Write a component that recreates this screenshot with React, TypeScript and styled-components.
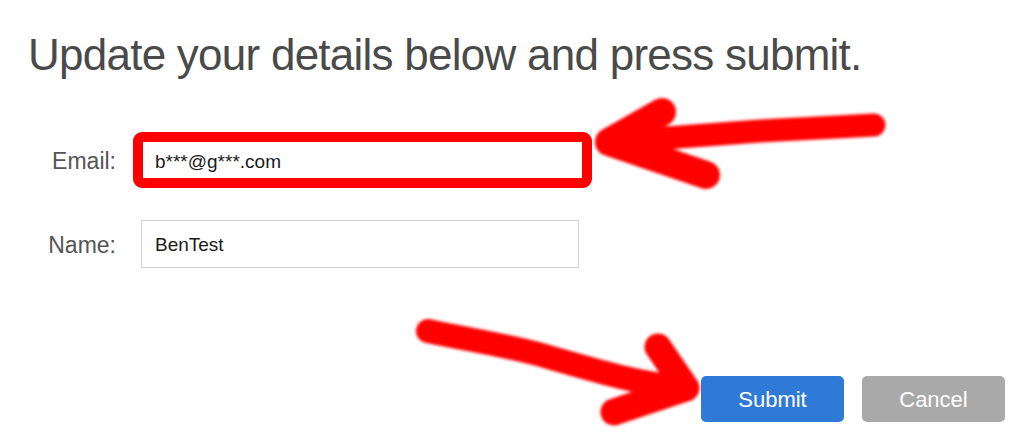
import styled, { createGlobalStyle } from "styled-components";

const GlobalStyle = createGlobalStyle`
    html, body {
        margin: 0;
        padding: 0;
        background: #ffffff;
    }
    body {
        font-family: "Liberation Sans", Helvetica, Arial, sans-serif;
    }
    * {
        box-sizing: border-box;
    }
`;

const App = () => {
    // 더미 사용자 정보
    const user = {
        email: "b***@g***.com",
        name: "BenTest"
    };

    return (
        <>
            <GlobalStyle />
            <Page>
                <Title>Update your details below and press submit.</Title>

                {/* 입력 폼 */}
                <Form>
                    <FieldRow>
                        <Label>Email:</Label>
                        <Input highlighted>{user.email}</Input>
                    </FieldRow>

                    <FieldRow>
                        <Label>Name:</Label>
                        <Input>{user.name}</Input>
                    </FieldRow>
                </Form>

                {/* 버튼 */}
                <ButtonRow>
                    <Button variant="primary">Submit</Button>
                    <Button variant="secondary">Cancel</Button>
                </ButtonRow>

                {/* 손그림 화살표 */}
                <Annotations width="1024" height="442" viewBox="0 0 1024 442">
                    <defs>
                        <filter id="soft" x="-10%" y="-10%" width="120%" height="120%">
                            <feGaussianBlur stdDeviation="1.8" />
                        </filter>
                    </defs>
                    <g
                        filter="url(#soft)"
                        fill="none"
                        stroke="#ff0000"
                        strokeLinecap="round"
                        strokeLinejoin="round"
                    >
                        <path d="M 874 125 L 760 131 L 612 142" strokeWidth="23" />
                        <path d="M 662 112 L 609 142 L 706 175" strokeWidth="28" />

                        <path
                            d="M 428 331 C 470 340, 510 346, 545 356 C 600 372, 640 384, 686 388"
                            strokeWidth="24"
                        />
                        <path d="M 658 347 L 686 388 L 614 412" strokeWidth="27" />
                    </g>
                </Annotations>
            </Page>
        </>
    );
};

export default App;

const Page = styled.div`
    position: relative;
    width: 1024px;
    height: 442px;
    padding-top: 30px;
    overflow: hidden;
`;

const Title = styled.h1`
    margin: 0 0 0 28px;
    font-size: 44px;
    line-height: 50px;
    letter-spacing: -0.75px;
    font-weight: 400;
    color: #4a4a4a;
`;

const Form = styled.div`
    display: flex;
    flex-direction: column;
    gap: 32px;
    margin-top: 52px;
`;

const FieldRow = styled.div`
    display: flex;
    align-items: center;
`;

const Label = styled.span`
    width: 116px;
    padding-top: 3px;
    text-align: right;
    font-size: 23px;
    color: #555555;
`;

const Input = styled.div<{ highlighted?: boolean }>`
    display: flex;
    align-items: center;
    background: #ffffff;
    font-size: 19px;
    color: #1a1a1a;
    margin-left: ${({ highlighted }) => (highlighted ? "17px" : "25px")};
    width: ${({ highlighted }) => (highlighted ? "459px" : "438px")};
    height: ${({ highlighted }) => (highlighted ? "56px" : "48px")};
    padding-left: ${({ highlighted }) => (highlighted ? "12px" : "13px")};
    padding-top: ${({ highlighted }) => (highlighted ? "4px" : "2px")};
    border: ${({ highlighted }) => (highlighted ? "10px solid #ff0000" : "1px solid #cfcfcf")};
    border-radius: ${({ highlighted }) => (highlighted ? "9px" : "1px")};
`;

const ButtonRow = styled.div`
    display: flex;
    justify-content: flex-end;
    gap: 18px;
    margin-top: 108px;
    padding-right: 19px;
`;

const Button = styled.button<{ variant: "primary" | "secondary" }>`
    width: 143px;
    height: 46px;
    padding-top: 3px;
    border: none;
    border-radius: 5px;
    font-family: inherit;
    font-size: 22px;
    color: #ffffff;
    background: ${({ variant }) => (variant === "primary" ? "#2f7ad6" : "#a9a9a9")};
    cursor: pointer;
`;

const Annotations = styled.svg`
    position: absolute;
    top: 0;
    left: 0;
    pointer-events: none;
`;
